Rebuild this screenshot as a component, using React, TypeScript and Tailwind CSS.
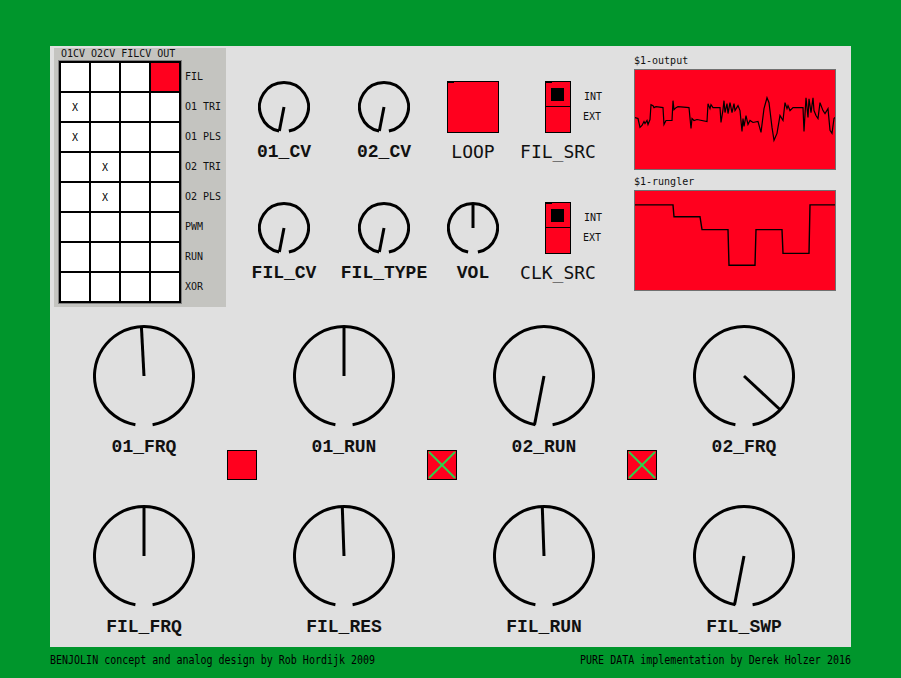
import React from 'react'

const outputWave: [number, number][] = [
  [0, 48], [3, 49], [5, 58], [7, 56], [9, 52], [10, 54], [12, 51], [13, 55], [15, 50], [16, 35],
  [18, 36], [19, 38], [21, 37], [28, 38], [29, 55], [31, 51], [37, 51], [38, 31], [39, 40], [41, 38],
  [43, 37], [54, 38], [56, 59], [57, 49], [59, 51], [62, 50], [72, 52], [73, 34], [75, 39], [76, 35],
  [78, 38], [85, 38], [86, 53], [88, 40], [89, 31], [90, 43], [92, 34], [93, 44], [95, 33], [97, 43],
  [99, 34], [100, 41], [103, 36], [105, 41], [107, 62], [108, 49], [109, 57], [111, 46], [113, 55],
  [115, 51], [118, 53], [123, 52], [126, 63], [129, 39], [132, 28], [134, 33], [137, 58], [139, 71],
  [142, 64], [145, 46], [148, 51], [150, 33], [152, 39], [153, 36], [155, 41], [158, 38], [168, 38],
  [169, 62], [171, 28], [173, 48], [174, 29], [176, 43], [178, 28], [179, 41], [181, 46], [183, 49],
  [185, 33], [188, 41], [190, 44], [193, 39], [195, 61], [197, 64], [199, 49], [200, 48],
]

const rungler = 'M0 14 H38 L39 26 H65 L67 39 H93 L94 75 H120 L121 39 H147 L148 63 H174 L175 14 H200'

const matrixMarks: Record<string, boolean> = { '1-0': true, '2-0': true, '3-1': true, '4-1': true }
const rowLabels = ['FIL', 'O1 TRI', 'O1 PLS', 'O2 TRI', 'O2 PLS', 'PWM', 'RUN', 'XOR']

// knob: angle in degrees, clockwise from top
const Knob = ({ size, angle }: { size: number; angle: number }) => {
  const c = size / 2
  const r = c - 1.5
  const pt = (deg: number) => {
    const a = (deg * Math.PI) / 180
    return [c + r * Math.sin(a), c - r * Math.cos(a)]
  }
  const gap = size > 60 ? 10 : 11.5
  const [sx, sy] = pt(180 + gap)
  const [ex, ey] = pt(180 - gap)
  const [px, py] = pt(angle)
  return (
    <svg width={size} height={size} viewBox={`0 0 ${size} ${size}`}>
      <path d={`M${sx} ${sy} A${r} ${r} 0 1 1 ${ex} ${ey}`} fill="none" stroke="#000" strokeWidth={3} />
      <line x1={c} y1={c} x2={px} y2={py} stroke="#000" strokeWidth={3} />
    </svg>
  )
}

const SmallKnob = ({ label, angle }: { label: string; angle: number }) => (
  <div className="flex flex-col items-center">
    <Knob size={52} angle={angle} />
    <div className="mt-[9px] h-[20px] leading-[20px] text-[18px] font-bold font-['Liberation_Mono',monospace] text-[#111] whitespace-nowrap">
      {label}
    </div>
  </div>
)

const BigKnob = ({ label, angle }: { label: string; angle: number }) => (
  <div className="flex w-[102px] flex-col items-center">
    <Knob size={102} angle={angle} />
    <div className="mt-[10px] h-[20px] leading-[20px] text-[18px] font-bold font-['Liberation_Mono',monospace] text-[#111] whitespace-nowrap">
      {label}
    </div>
  </div>
)

const Radio = ({ label }: { label: string }) => (
  <div className="flex flex-col items-center">
    <div className="relative flex h-[52px] w-[26px] flex-col border border-black bg-[#ff001e]">
      <div className="absolute left-[-1px] top-[-1px] h-[2px] w-[7px] bg-black" />
      <div className="flex h-[25px] items-center justify-center border-b border-black">
        <div className="h-[13px] w-[13px] bg-black" />
      </div>
      <div className="flex-1" />
      <div className="absolute left-[38px] top-[9px] text-[10px] leading-[12px] text-[#111]">INT</div>
      <div className="absolute left-[37px] top-[29px] text-[10px] leading-[12px] text-[#111]">EXT</div>
    </div>
    <div className="mt-[9px] h-[20px] leading-[20px] text-[18px] text-[#111] whitespace-nowrap">{label}</div>
  </div>
)

const CrossToggle = () => (
  <div className="h-[30px] w-[30px] border border-black bg-[#ff001e]">
    <svg width={28} height={28} viewBox="0 0 28 28">
      <line x1={1} y1={1} x2={27} y2={27} stroke="#2bd14a" strokeWidth={2} />
      <line x1={27} y1={1} x2={1} y2={27} stroke="#2bd14a" strokeWidth={2} />
    </svg>
  </div>
)

const Scope = ({ label, children }: { label: string; children: React.ReactNode }) => (
  <div className="flex flex-col">
    <div className="h-[12px] text-[10px] leading-[12px] text-[#111]">{label}</div>
    <div className="mt-[2px] h-[101px] w-[202px] border border-[#707070] bg-[#ff001e]">
      <svg width={200} height={99} viewBox="0 0 200 100" preserveAspectRatio="none">
        {children}
      </svg>
    </div>
  </div>
)

export default function App() {
  const wave = outputWave.map(([x, y], i) => `${i ? 'L' : 'M'}${x} ${y}`).join(' ')
  return (
    <div className="h-[678px] w-[901px] bg-[#00962c] pl-[50px] pt-[46px] font-['DejaVu_Sans_Mono',monospace] text-black">
      <div className="flex h-[601px] w-[801px] flex-col bg-[#e0e0e0]">
        {/* top */}
        <div className="flex h-[279px]">
          <div className="ml-[4px] mt-[2px] flex h-[259px] w-[172px] flex-col bg-[#c4c4c0]">
            <div className="h-[12px] pl-[7px] text-[10px] leading-[12px] text-[#111] whitespace-pre">O1CV O2CV FILCV OUT</div>
            <div className="flex">
              <div className="ml-[4px] border border-[#808080]">
                <div className="grid grid-cols-[repeat(4,28px)] gap-[2px] bg-black p-[2px]">
                  {rowLabels.map((_, r) =>
                    [0, 1, 2, 3].map((c) => (
                      <div
                        key={`${r}-${c}`}
                        className={`flex h-[28px] w-[28px] items-center justify-center text-[10px] ${
                          r === 0 && c === 3 ? 'bg-[#ff001e]' : 'bg-white'
                        }`}
                      >
                        {matrixMarks[`${r}-${c}`] ? 'X' : ''}
                      </div>
                    ))
                  )}
                </div>
              </div>
              <div className="ml-[3px] flex flex-col pt-[1px]">
                {rowLabels.map((l) => (
                  <div key={l} className="flex h-[30px] items-center text-[10px] text-[#111] whitespace-pre">
                    {l}
                  </div>
                ))}
              </div>
            </div>
          </div>

          <div className="ml-[8px] flex flex-col pt-[35px]">
            <div className="flex">
              <div className="flex w-[100px] justify-center">
                <SmallKnob label="01_CV" angle={191} />
              </div>
              <div className="flex w-[100px] justify-center">
                <SmallKnob label="02_CV" angle={191} />
              </div>
              <div className="flex w-[78px] justify-center">
                <div className="flex flex-col items-center">
                  <div className="relative h-[52px] w-[52px] border border-black bg-[#ff001e]">
                    <div className="absolute left-[-1px] top-[-1px] h-[2px] w-[7px] bg-black" />
                  </div>
                  <div className="mt-[9px] h-[20px] leading-[20px] text-[18px] text-[#111]">LOOP</div>
                </div>
              </div>
              <div className="flex w-[92px] justify-center">
                <Radio label="FIL_SRC" />
              </div>
            </div>
            <div className="mt-[40px] flex">
              <div className="flex w-[100px] justify-center">
                <SmallKnob label="FIL_CV" angle={191} />
              </div>
              <div className="flex w-[100px] justify-center">
                <SmallKnob label="FIL_TYPE" angle={191} />
              </div>
              <div className="flex w-[78px] justify-center">
                <SmallKnob label="VOL" angle={0} />
              </div>
              <div className="flex w-[92px] justify-center">
                <Radio label="CLK_SRC" />
              </div>
            </div>
          </div>

          <div className="ml-[30px] flex flex-col pt-[9px]">
            <Scope label="$1-output">
              <path d={wave} fill="none" stroke="#000" strokeWidth={1.2} />
            </Scope>
            <div className="mt-[6px]">
              <Scope label="$1-rungler">
                <path d={rungler} fill="none" stroke="#000" strokeWidth={1.4} />
              </Scope>
            </div>
          </div>
        </div>

        {/* big knobs */}
        <div className="flex gap-[98px] pl-[43px]">
          <BigKnob label="01_FRQ" angle={357} />
          <BigKnob label="01_RUN" angle={0} />
          <BigKnob label="02_RUN" angle={191} />
          <BigKnob label="02_FRQ" angle={133} />
        </div>
        <div className="-mt-[7px] flex h-[30px] gap-[170px] pl-[177px]">
          <div className="h-[30px] w-[30px] border border-black bg-[#ff001e]" />
          <CrossToggle />
          <CrossToggle />
        </div>
        <div className="mt-[25px] flex gap-[98px] pl-[43px]">
          <BigKnob label="FIL_FRQ" angle={0} />
          <BigKnob label="FIL_RES" angle={358} />
          <BigKnob label="FIL_RUN" angle={358} />
          <BigKnob label="FIL_SWP" angle={191} />
        </div>
      </div>

      <div className="mt-[7px] flex w-[801px] justify-between text-[10px] leading-[12px] text-black">
        <span className="origin-center scale-y-125 whitespace-pre">BENJOLIN concept and analog design by Rob Hordijk 2009</span>
        <span className="origin-center scale-y-125 whitespace-pre">PURE DATA implementation by Derek Holzer 2016</span>
      </div>
    </div>
  )
}
